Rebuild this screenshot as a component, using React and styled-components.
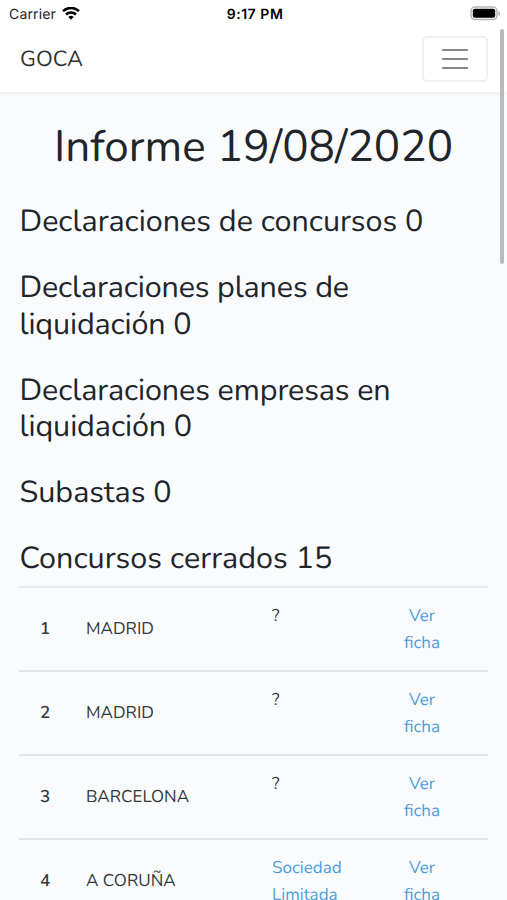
import React, { PureComponent } from 'react'
import styled, { createGlobalStyle } from 'styled-components'

const GlobalStyle = createGlobalStyle`
  * {
    box-sizing: border-box;
  }

  body {
    margin: 0;
    overflow: hidden;
    background-color: #f9fbfd;
    color: #212529;
    font-family: Nunito, Lato, sans-serif;
    text-rendering: geometricPrecision;
    font-variant-ligatures: common-ligatures;
  }
`

const PhoneScreen = styled.div`
  position: relative;
  height: 900px;
  overflow: hidden;
`

const StatusBar = styled.div`
  display: grid;
  grid-template-columns: 1fr auto 1fr;
  align-items: center;
  height: 27px;
  padding: 0 6px 0 9px;
  background-color: #fff;
  color: #222;
  font-family: Inter, sans-serif;
  font-size: 14px;
`

const Carrier = styled.div`
  display: flex;
  align-items: center;
  gap: 6px;
  padding-top: 1px;
  letter-spacing: 0.15px;
`

const Clock = styled.div`
  padding-top: 1px;
  color: #000;
  font-size: 14px;
  font-weight: 600;
  letter-spacing: 0.55px;
`

const Battery = styled.svg`
  justify-self: end;
`

const Navbar = styled.nav`
  display: flex;
  align-items: center;
  justify-content: space-between;
  height: 65px;
  padding: 0 19px 3px 20px;
  background-color: #fff;
  box-shadow: 0 2px 4px rgba(0, 0, 0, 0.05);
`

const Brand = styled.a`
  padding-top: 1px;
  color: #2f3337;
  font-size: 21.9px;
`

const Toggler = styled.button`
  display: flex;
  align-items: center;
  justify-content: center;
  width: 66px;
  height: 46px;
  margin-top: 1px;
  padding: 0;
  border: 2px solid #efefef;
  border-radius: 5px;
  background: transparent;
`

const Content = styled.main`
  padding: 33px 19px 0 19px;
`

const Title = styled.h1`
  margin: 0 0 33px;
  font-size: 44px;
  font-weight: 400;
  line-height: 45px;
  text-align: center;
  white-space: nowrap;
`

const Section = styled.h3`
  margin: 0 0 29.3px;
  padding-left: 0.5px;
  font-size: 30.5px;
  font-weight: 400;
  letter-spacing: ${props => props.$tracking || 0}px;
  line-height: 36.7px;
`

const Table = styled.div`
  margin-top: -20px;
`

const Row = styled.div`
  display: grid;
  grid-template-columns: 52px 186px 99px 1fr;
  height: 84px;
  padding-top: 15px;
  border-top: 2px solid #e3e6e8;
  color: #33373b;
  font-size: 17px;
  line-height: 27px;

  &:first-child {
    border-top-color: #e9ecee;
  }
`

const Num = styled.div`
  align-self: center;
  padding-bottom: 15px;
  font-weight: 600;
  text-align: center;
`

const City = styled.div`
  align-self: center;
  padding: 0 0 15px 15px;
`

const Company = styled.div`
  padding-left: 15px;
`

const Ficha = styled.div`
  text-align: center;
`

const Link = styled.a`
  color: #4c9edc;
`

const Scrollbar = styled.div`
  position: absolute;
  top: 29px;
  right: 3px;
  width: 4px;
  height: 235px;
  border-radius: 2px;
  background-color: #b9babc;
`

const sections = [
  { text: 'Declaraciones de concursos 0' },
  { text: 'Declaraciones planes de liquidación 0', tracking: -0.13 },
  { text: 'Declaraciones empresas en liquidación 0', tracking: -0.09 },
  { text: 'Subastas 0' },
  { text: 'Concursos cerrados 15', tracking: 0.06 }
]

const rows = [
  { city: 'MADRID' },
  { city: 'MADRID' },
  { city: 'BARCELONA' },
  { city: 'A CORUÑA', company: 'Sociedad Limitada' }
]

export default class App extends PureComponent {
  render() {
    return (
      <PhoneScreen>
        <GlobalStyle />
        <StatusBar>
          <Carrier>
            Carrier
            <svg width="18" height="14" viewBox="0 0 18 14" fill="none" stroke="#000" strokeWidth="2.5">
              <path d="M1 4.2a11.4 11.4 0 0 1 16 0" />
              <path d="M4 7.5a7.1 7.1 0 0 1 10 0" />
              <path d="M9 12.8 6.3 10.1a3.9 3.9 0 0 1 5.4 0z" fill="#000" stroke="none" />
            </svg>
          </Carrier>
          <Clock>9:17 PM</Clock>
          <Battery width="31" height="15" viewBox="0 0 31 15">
            <rect x="1" y="1" width="26" height="12.6" rx="4" fill="#fff" stroke="#b5b5b5" strokeWidth="1.5" />
            <rect x="2.8" y="2.8" width="22.4" height="9" rx="2" fill="#000" />
            <path d="M28.5 5.2c2.2 1 2.2 3.6 0 4.6z" fill="#a8a8a8" />
          </Battery>
        </StatusBar>
        <Navbar>
          <Brand>GOCA</Brand>
          <Toggler>
            <svg width="28" height="22" viewBox="0 0 28 22" stroke="#868686" strokeWidth="2.2" strokeLinecap="round">
              <path d="M2 2h24M2 11h24M2 20h24" />
            </svg>
          </Toggler>
        </Navbar>
        <Content>
          <Title>Informe 19/08/2020</Title>
          {sections.map(section => (
            <Section key={section.text} $tracking={section.tracking}>{section.text}</Section>
          ))}
          <Table>
            {rows.map((row, i) => (
              <Row key={i}>
                <Num>{i + 1}</Num>
                <City>{row.city}</City>
                <Company>
                  {row.company ? <Link>{row.company}</Link> : '?'}
                </Company>
                <Ficha><Link>Ver<br />ficha</Link></Ficha>
              </Row>
            ))}
          </Table>
        </Content>
        <Scrollbar />
      </PhoneScreen>
    )
  }
}
